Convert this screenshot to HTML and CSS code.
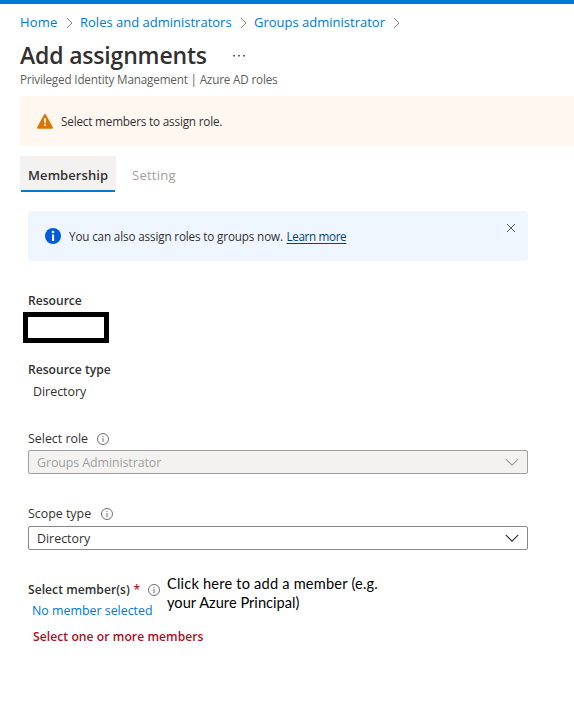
FILE: index.html
```html
<!DOCTYPE html>
<html lang="en">
<head>
<meta charset="utf-8">
<title>Add assignments</title>
<link rel="stylesheet" href="styles.css">
</head>
<body>
<div class="topbar"></div>
<nav class="breadcrumb">
  <a class="crumb-home">Home</a>
  <svg class="sep" width="7" height="12" viewBox="0 0 7 12"><path d="M1 1l5 5-5 5"/></svg>
  <a class="crumb-roles">Roles and administrators</a>
  <svg class="sep" width="7" height="12" viewBox="0 0 7 12"><path d="M1 1l5 5-5 5"/></svg>
  <a class="crumb-groups">Groups administrator</a>
  <svg class="sep" width="7" height="12" viewBox="0 0 7 12"><path d="M1 1l5 5-5 5"/></svg>
</nav>
<header class="header">
  <div class="title-row">
    <h1>Add assignments</h1>
    <svg class="more" width="12" height="2" viewBox="0 0 12 2"><path d="M0 0h2v1.5H0zM5 0h2v1.5H5zM10 0h2v1.5h-2z"/></svg>
  </div>
  <p class="subtitle">Privileged Identity Management | Azure AD roles</p>
</header>
<div class="warning">
  <svg width="16" height="15" viewBox="0 0 16 15"><path d="M7.1.6a1 1 0 0 1 1.8 0l6.9 12.7a1 1 0 0 1-.9 1.5H1.1a1 1 0 0 1-.9-1.5z" fill="#db7500"/><path d="M7 4.2h2l-.3 5H7.3zM7.1 10.3h1.8v1.8H7.1z" fill="#fff"/></svg>
  <span>Select members to assign role.</span>
</div>
<div class="tabs">
  <div class="tab active"><span>Membership</span></div>
  <div class="tab disabled"><span>Setting</span></div>
</div>
<main class="content">
  <div class="info">
    <svg width="16" height="16" viewBox="0 0 16 16"><circle cx="8" cy="8" r="8" fill="#015cda"/><circle cx="8" cy="4" r="1.35" fill="#fff"/><path d="M7 6.5h2.1V13H7z" fill="#fff"/></svg>
    <p><span class="info-text">You can also assign roles to groups now.</span><a class="learn">Learn more</a></p>
    <svg class="close" width="10" height="10" viewBox="0 0 10 10"><path d="M1 1l8 8M9 1l-8 8"/></svg>
  </div>
  <div class="label strong resource">Resource</div>
  <div class="redacted"></div>
  <div class="label strong type">Resource type</div>
  <div class="value">Directory</div>
  <div class="label role"><span class="t-role">Select role</span><svg class="hint" width="12" height="12" viewBox="0 0 12 12"><circle cx="6" cy="6" r="5.5"/><path d="M6 5v4M6 3v1"/></svg></div>
  <div class="select off"><span class="t-groups">Groups Administrator</span><svg width="14" height="8" viewBox="0 0 14 8"><path d="M.7.8L7 7.1 13.3.8"/></svg></div>
  <div class="label scope"><span class="t-scope">Scope type</span><svg class="hint" width="12" height="12" viewBox="0 0 12 12"><circle cx="6" cy="6" r="5.5"/><path d="M6 5v4M6 3v1"/></svg></div>
  <div class="select"><span class="t-dir">Directory</span><svg width="14" height="8" viewBox="0 0 14 8"><path d="M.7.8L7 7.1 13.3.8"/></svg></div>
  <div class="members">
    <div class="member-fields">
      <div class="label member-label"><span class="t-members">Select member(s)</span><span class="req">*</span><svg class="hint" width="12" height="12" viewBox="0 0 12 12"><circle cx="6" cy="6" r="5.5"/><path d="M6 5v4M6 3v1"/></svg></div>
      <a class="member-link">No member selected</a>
    </div>
    <p class="note"><span class="n1">Click here to add a member (e.g.</span><br><span class="n2">your Azure Principal)</span></p>
  </div>
  <p class="error">Select one or more members</p>
</main>
</body>
</html>
```

FILE: styles.css
```css
* { box-sizing: border-box; }
body {
  margin: 0;
  background: #fff;
  color: #323130;
  font-family: "Open Sans", "Noto Sans", sans-serif;
  font-size: 12.4px;
  line-height: 18px;
  white-space: nowrap;
}
h1, p { margin: 0; }
svg { flex: none; display: block; }
a { color: #0078d4; }
.topbar { height: 4px; background: #0078d4; }
.breadcrumb {
  display: flex;
  align-items: center;
  height: 18px;
  margin: 9px 0 0 20px;
  font-size: 13px;
}
.crumb-home { width: 46px; letter-spacing: .15px; }
.crumb-roles { width: 160px; margin-left: 7px; }
.crumb-groups { width: 139px; margin-left: 7px; }
.sep { fill: none; stroke: #8a8886; position: relative; top: 1px; }
.header { height: 65px; padding: 9px 0 0 20px; }
.title-row { display: flex; align-items: center; height: 32px; }
h1 { width: 213px; font-size: 23px; font-weight: 600; line-height: 30px; letter-spacing: -.17px; margin-top: -2px; }
.more { fill: #605e5c; }
.subtitle { margin-top: -1px; font-size: 11.7px; line-height: 16px; letter-spacing: -.17px; color: #605e5c; }
.warning {
  display: flex;
  align-items: center;
  gap: 8px;
  height: 50px;
  margin-left: 20px;
  padding-left: 17px;
  background: #fff7f0;
  border-radius: 2px 0 0 2px;
  font-size: 11.7px;
  letter-spacing: -.17px;
}
.tabs { display: flex; margin: 10px 0 0 20px; height: 36px; font-size: 13px; }
.tab { width: 96px; padding-left: 8px; line-height: 38px; }
.active {
  font-weight: 600;
  letter-spacing: .08px;
  background: linear-gradient(#0078d4, #0078d4) center bottom / 94px 2px no-repeat #f3f2f1;
}
.disabled { margin-left: 8px; color: #a19f9d; letter-spacing: .25px; }
.tab.disabled { padding-left: 8px; }
.content { width: 500px; margin: 19px 0 0 28px; }
.info {
  display: flex;
  align-items: center;
  height: 50px;
  padding-left: 17px;
  background: #f0f6ff;
  border-radius: 3px;
  font-size: 11.7px;
  letter-spacing: -.15px;
}
.info p { display: flex; margin: 0 0 0 8px; }
.info-text { width: 217.5px; }
.learn { color: #004578; letter-spacing: -.35px; text-decoration: underline; text-underline-offset: 2px; }
.close {
  align-self: flex-start;
  margin: 12px 12px 0 auto;
  fill: none;
  stroke: #605e5c;
}
.label { display: flex; align-items: center; height: 18px; }
.strong { font-weight: 600; font-size: 12.1px; }
.resource { margin-top: 31px; }
.redacted { width: 86px; height: 31px; margin: 2px 0 0 -5px; border: 5px solid #000; }
.type { margin-top: 18px; }
.value { margin: 4px 0 0 5px; }
.role { margin-top: 29px; }
.role .hint { margin-top: -1px; }
.hint { fill: none; stroke: #605e5c; stroke-width: .9; }
.t-role { width: 69px; }
.t-scope { width: 73px; }
.select {
  display: flex;
  align-items: center;
  justify-content: space-between;
  height: 24px;
  margin-top: 3px;
  padding: 0 8px;
  border: 1px solid #8a8886;
  border-radius: 2px;
}
.select span { margin-top: 2px; }
.role + .select { margin-top: 2px; }
.t-groups { letter-spacing: -.08px; }
.select svg { fill: none; stroke: #323130; stroke-width: 1.1; }
.select.off { color: #a19f9d; background: #f3f2f1; border-color: #a19f9d; }
.select.off svg { stroke: #a19f9d; }
.scope { margin-top: 31px; }
.members { display: flex; margin-top: 25px; height: 46px; }
.member-fields { width: 139px; padding-top: 6px; }
.member-label { font-weight: 600; font-size: 12.1px; }
.t-members { width: 105.5px; letter-spacing: .04px; }
.req { width: 14.5px; color: #a4262c; }
.member-link { display: block; margin: 3px 0 0 4px; }
.note {
  color: #000;
  font-family: Lato, sans-serif;
  font-size: 14.6px;
  line-height: 19px;
  margin-top: -1px;
}
.n1 { letter-spacing: .2px; }
.n2 { letter-spacing: .03px; }
.error { margin: 7px 0 0 5px; color: #a80f22; font-size: 12.1px; font-weight: 600; letter-spacing: .07px; }
```
